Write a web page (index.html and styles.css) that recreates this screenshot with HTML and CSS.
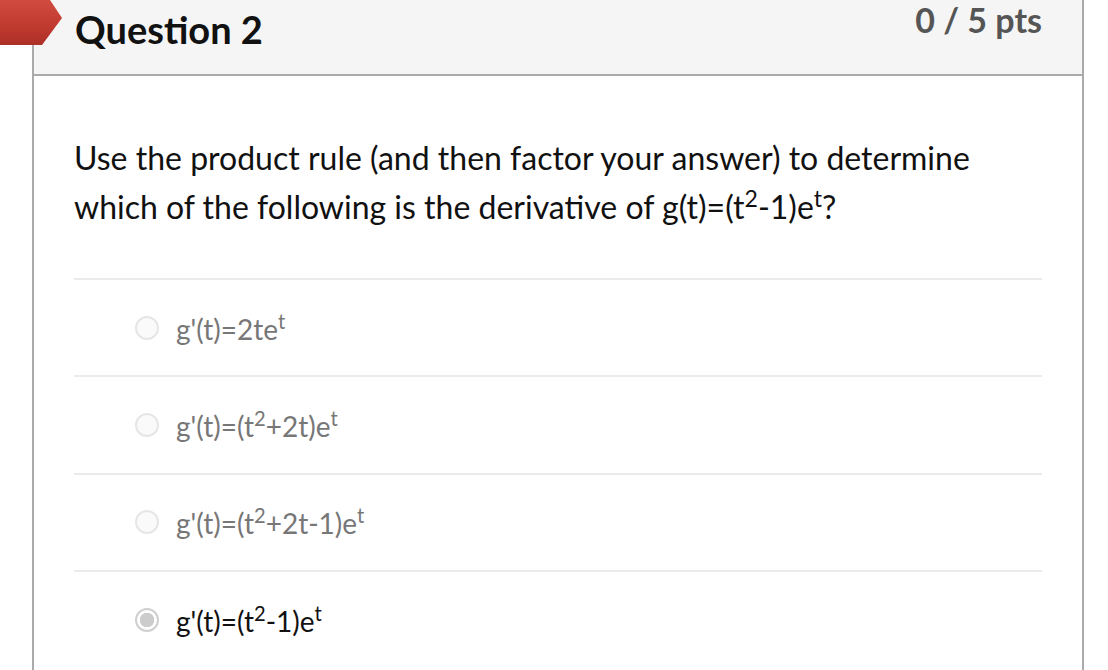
FILE: index.html
```html
<!DOCTYPE html>
<html>
<head>
<meta charset="utf-8">
<link rel="stylesheet" href="styles.css">
</head>
<body>
<div class="flag"></div>
<div class="panel">
  <div class="header">
    <h2 class="title">Question 2</h2>
    <div class="pts">0 / 5 pts</div>
  </div>
  <div class="body">
    <p class="question">Use the product rule (and then factor your answer) to determine which of the following is the derivative of g(t)=(t<sup>2</sup>-1)e<sup>t</sup>?</p>
    <div class="answers">
      <div class="answer">
        <span class="radio"></span>
        <span class="label">g'(t)=2te<sup>t</sup></span>
      </div>
      <div class="answer">
        <span class="radio"></span>
        <span class="label">g'(t)=(t<sup>2</sup>+2t)e<sup>t</sup></span>
      </div>
      <div class="answer">
        <span class="radio"></span>
        <span class="label">g'(t)=(t<sup>2</sup>+2t-1)e<sup>t</sup></span>
      </div>
      <div class="answer selected">
        <span class="radio"></span>
        <span class="label">g'(t)=(t<sup>2</sup>-1)e<sup>t</sup></span>
      </div>
    </div>
  </div>
</div>
</body>
</html>
```

FILE: styles.css
```css
html, body {
  margin: 0;
  padding: 0;
  background: #fff;
  font-family: Lato, "Open Sans", "Liberation Sans", sans-serif;
  overflow: hidden;
}

.flag {
  position: absolute;
  left: 0;
  top: 0;
  width: 62px;
  height: 45px;
  background: linear-gradient(180deg, #d24b40 0%, #c0392f 60%, #ad2f27 100%);
  clip-path: polygon(0 0, 50px 0, 62px 18px, 42px 45px, 0 45px);
  z-index: 2;
}

.panel {
  margin-left: 32px;
  width: 1048px;
  border-left: 2px solid #aaaaaa;
  border-right: 2px solid #aaaaaa;
  min-height: 700px;
}

.header {
  display: flex;
  justify-content: space-between;
  align-items: flex-start;
  height: 74px;
  background: #f5f5f5;
  border-bottom: 2px solid #aaaaaa;
  padding: 0 40px 0 41px;
}

.title {
  margin: 0;
  padding-top: 7px;
  font-size: 38px;
  font-weight: 700;
  color: #111;
  line-height: 44px;
}

.pts {
  padding-top: 0;
  font-size: 34px;
  font-weight: 700;
  color: #555;
  line-height: 40px;
}

.body {
  padding: 57px 40px 0 40px;
}

.question {
  margin: 0 0 47px 0;
  font-size: 32px;
  line-height: 49px;
  color: #111;
}

.question sup {
  font-size: 0.72em;
  line-height: 0;
  vertical-align: 0.5em;
}

.answer {
  display: flex;
  align-items: center;
  height: 95.4px;
  border-top: 2px solid #ebebeb;
  padding-left: 61px;
}

.radio {
  box-sizing: border-box;
  width: 24px;
  height: 24px;
  border-radius: 50%;
  border: 2px solid #e6e6e6;
  background: #fafafa;
  margin-right: 17px;
  flex: none;
}

.label {
  font-size: 28px;
  color: #777;
  line-height: 30px;
  position: relative;
  top: 1px;
}

.label sup {
  font-size: 0.72em;
  line-height: 0;
  vertical-align: 0.55em;
}

.selected .label {
  color: #111;
}

.selected .radio {
  border: 2px solid #cfcfcf;
  background: radial-gradient(circle, #cccccc 0, #cccccc 7px, #fff 7.5px);
}
```
